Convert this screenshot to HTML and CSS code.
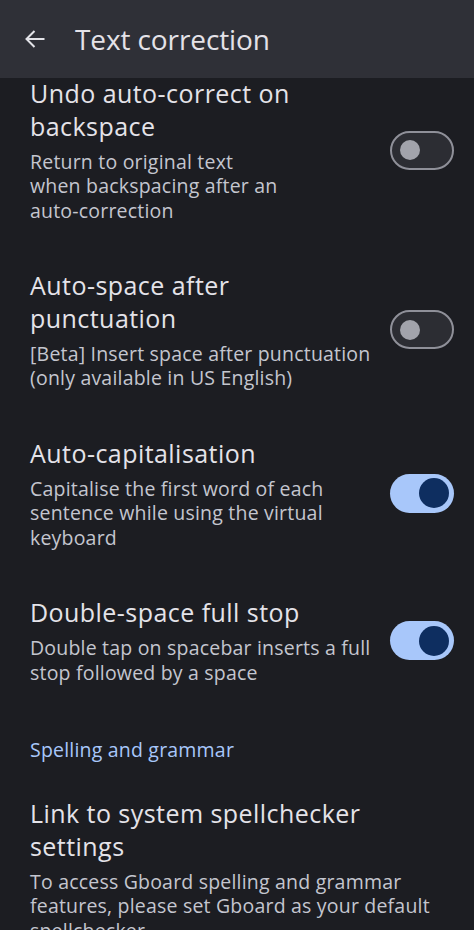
FILE: index.html
```html
<!DOCTYPE html>
<html>
<head>
<meta charset="utf-8">
<link rel="stylesheet" href="styles.css">
</head>
<body>
<header class="appbar">
  <svg class="back" width="24" height="24" viewBox="0 0 24 24"><path d="M21.5 12H4M11.5 4L3.5 12L11.5 20" fill="none" stroke="#e3e3e8" stroke-width="2"/></svg>
  <h1 class="appbar-title">Text correction</h1>
</header>
<main class="list">
  <div class="item first">
    <div class="text">
      <div class="title">Undo auto-correct on<br>backspace</div>
      <div class="summary">Return to original text<br>when backspacing after an<br>auto-correction</div>
    </div>
    <div class="switch off"><span class="thumb"></span></div>
  </div>
  <div class="item">
    <div class="text">
      <div class="title">Auto-space after<br>punctuation</div>
      <div class="summary">[Beta] Insert space after punctuation<br>(only available in US English)</div>
    </div>
    <div class="switch off"><span class="thumb"></span></div>
  </div>
  <div class="item">
    <div class="text">
      <div class="title">Auto-capitalisation</div>
      <div class="summary">Capitalise the first word of each<br>sentence while using the virtual<br>keyboard</div>
    </div>
    <div class="switch on"><span class="thumb"></span></div>
  </div>
  <div class="item">
    <div class="text">
      <div class="title">Double-space full stop</div>
      <div class="summary">Double tap on spacebar inserts a full<br>stop followed by a space</div>
    </div>
    <div class="switch on"><span class="thumb"></span></div>
  </div>
  <div class="category">Spelling and grammar</div>
  <div class="item">
    <div class="text">
      <div class="title">Link to system spellchecker<br>settings</div>
      <div class="summary">To access Gboard spelling and grammar<br>features, please set Gboard as your default<br>spellchecker</div>
    </div>
  </div>
</main>
</body>
</html>
```
FILE: styles.css
```css
html, body {
  margin: 0;
  padding: 0;
  background: #1c1d22;
  font-family: "Open Sans", Roboto, sans-serif;
  overflow: hidden;
}
.appbar {
  height: 78px;
  background: #2f3037;
  display: flex;
  align-items: center;
  padding-left: 23px;
  box-sizing: border-box;
}
.back {
  display: block;
}
.appbar-title {
  margin: 0 0 0 28px;
  font-size: 28px;
  letter-spacing: -0.1px;
  font-weight: 400;
  color: #e4e2e8;
}
.item {
  display: flex;
  align-items: center;
  padding: 23px 20px 23px 30px;
}
.item.first {
  padding-top: 0;
  margin-top: -1px;
}
.text {
  flex: 1;
  min-width: 0;
}
.title {
  font-size: 25px;
  line-height: 32.5px;
  letter-spacing: 0.45px;
  color: #e4e3e9;
}
.summary {
  margin-top: 7.5px;
  font-size: 19.5px;
  line-height: 24.5px;
  letter-spacing: 0.2px;
  color: #c4c6cf;
}
.switch {
  width: 64px;
  height: 39px;
  border-radius: 20px;
  box-sizing: border-box;
  display: flex;
  align-items: center;
  flex: none;
}
.switch.off {
  border: 2px solid #8f9099;
  background: #2c2d33;
  padding-left: 8px;
}
.switch.off .thumb {
  width: 20px;
  height: 20px;
  border-radius: 50%;
  background: #a2a3ab;
}
.switch.on {
  background: #a8c7fa;
  justify-content: flex-end;
  padding-right: 5px;
}
.switch.on .thumb {
  width: 30px;
  height: 30px;
  border-radius: 50%;
  background: #0e2e60;
}
.category {
  padding: 30px 30px 11.5px;
  font-size: 19.5px;
  line-height: 24.5px;
  letter-spacing: 0.2px;
  color: #a8c7fa;
}
```
